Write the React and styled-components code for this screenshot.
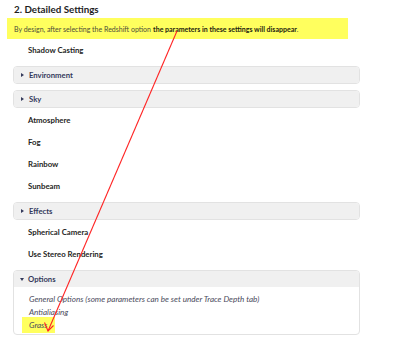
import styled, { createGlobalStyle } from "styled-components";

const Global = createGlobalStyle`
  body {
    margin: 0;
    background: #fff;
    font-family: Lato, "Open Sans", sans-serif;
  }
`

const Page = styled.div`
  position: relative;
  width: 400px;
  height: 362px;
  overflow: hidden;
`

const Title = styled.h2`
  margin: 0;
  height: 18px;
  padding-left: 14px;
  display: flex;
  align-items: center;
  font-size: 9.8px;
  font-weight: 700;
  color: #1e1e1e;
`

const Note = styled.div`
  margin-left: 7px;
  width: 341px;
  height: 21px;
  padding-left: 7px;
  box-sizing: border-box;
  display: flex;
  align-items: center;
  background: #ffff5e;
  font-size: 7px;
  color: #4d4d3a;
  white-space: nowrap;

  b {
    color: #1e1e10;
    font-weight: 700;
    margin-left: 0.3em;
  }
`

const List = styled.div`
  display: flex;
  flex-direction: column;
  padding-left: 13px;
  width: 347px;
`

const Row = styled.div`
  height: 22px;
  padding-left: 15px;
  display: flex;
  align-items: center;
  font-size: 7.8px;
  font-weight: 700;
  color: #1f1f24;
`

const Panel = styled.div`
  margin: 5px 0 1px;
  border: 1px solid #e2e2e2;
  border-radius: 4px;
  background: #fff;
  overflow: hidden;
`

const PanelHead = styled.div`
  height: 16px;
  display: flex;
  align-items: center;
  gap: 5px;
  padding-left: 6px;
  background: #f0f0f0;
  font-size: 7.7px;
  font-weight: 700;
  color: #343a5c;
`

const Caret = styled.span`
  width: 0;
  height: 0;
  ${({ $open }) =>
    $open
      ? `border-left: 2.5px solid transparent;
         border-right: 2.5px solid transparent;
         border-top: 3px solid #343a5c;
         margin-right: -1px;`
      : `border-top: 2.5px solid transparent;
         border-bottom: 2.5px solid transparent;
         border-left: 3px solid #343a5c;
         margin-left: 1px;`}
`

const PanelBody = styled.div`
  padding: 5px 0 3px 15px;
  display: flex;
  flex-direction: column;
  align-items: flex-start;
`

const Line = styled.div`
  height: 13px;
  display: flex;
  align-items: center;
  font-size: 8.1px;
  font-style: italic;
  color: #4a4b5c;
`

const Mark = styled.span`
  display: inline-flex;
  align-items: center;
  height: 16px;
  padding: 0 7px;
  margin-left: -7px;
  background: #ffff5e;
`

const Arrow = styled.svg`
  position: absolute;
  left: 0;
  top: 0;
  pointer-events: none;
`

function Section({ label, open, children }) {
  return (
    <Panel>
      <PanelHead>
        <Caret $open={open} />
        {label}
      </PanelHead>
      {open && <PanelBody>{children}</PanelBody>}
    </Panel>
  );
}

export default function App() {
  return (
    <Page>
      <Global />
      <Title>2. Detailed Settings</Title>
      <Note>
        By design, after selecting the Redshift option<b>the parameters in these settings will disappear</b>.
      </Note>
      <List>
        <Row>Shadow Casting</Row>
        <Section label="Environment" />
        <Section label="Sky" />
        <Row>Atmosphere</Row>
        <Row>Fog</Row>
        <Row>Rainbow</Row>
        <Row>Sunbeam</Row>
        <Section label="Effects" />
        <Row>Spherical Camera</Row>
        <Row>Use Stereo Rendering</Row>
        <Section label="Options" open>
          <Line>General Options (some parameters can be set under Trace Depth tab)</Line>
          <Line>Antialiasing</Line>
          <Line>
            <Mark>Grass</Mark>
          </Line>
        </Section>
      </List>
      <Arrow width="400" height="362" viewBox="0 0 400 362">
        <line x1="177" y1="31" x2="48" y2="331" stroke="#ff2424" strokeWidth="1.1" />
        <path d="M44.5 322.5 L48 331 L53.5 325.5" fill="none" stroke="#ff2424" strokeWidth="1.1" />
      </Arrow>
    </Page>
  );
}
